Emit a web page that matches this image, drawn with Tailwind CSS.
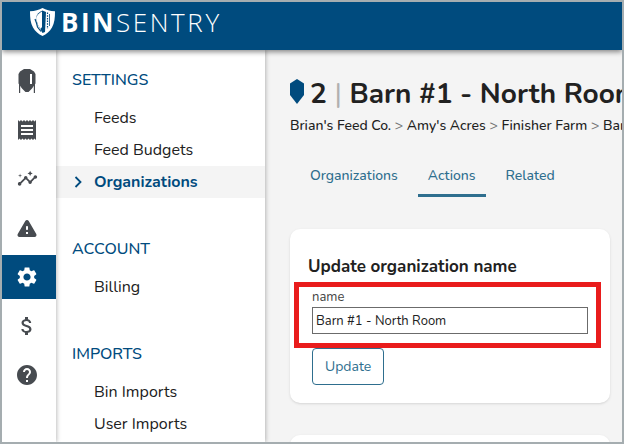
<!DOCTYPE html>
<html lang="en">
<head>
    <meta charset="UTF-8">
    <meta name="viewport" content="width=device-width, initial-scale=1.0">
    <title>BinSentry - Organizations</title>
    <script src="https://cdn.jsdelivr.net/npm/@tailwindcss/browser@4"></script>
</head>
<body class="flex h-screen flex-col overflow-hidden border-2 border-[#a5adb0] bg-[#f4f4f4] font-['Nunito','Noto_Sans',sans-serif] text-[#212121]">

    <!-- Top bar -->
    <header class="relative z-20 flex h-12 shrink-0 items-center bg-[#004b7e] pb-2 pl-7 text-white shadow-[0_2px_5px_rgba(0,0,0,0.45)]">
        <a href="#" class="flex items-center gap-1.5" aria-label="BinSentry">
            <svg class="h-7 w-[25px]" viewBox="0 0 25 28">
                <path fill="#fff" d="M12.5 0C9 2 5 3 0 3.200C0 10 .5 15 3 19.500C5.200 23.500 8.500 26 12.500 28C16.500 26 19.800 23.500 22 19.500C24.500 15 25 10 25 3.200C20 3 16 2 12.500 0z"/>
                <path fill="#004b7e" d="M12.500 2.500L16 4L15 24L12.500 25L8 17L6 10C7 6 9 4 12.500 2.500z"/>
                <path fill="#fff" d="M12 3.500C9 5 7 7 6 10L8 17L10.500 21L12 19z"/>
                <path fill="none" stroke="#004b7e" stroke-width="1.200" d="M5 11L6.500 15L7.500 19L11 23.500"/>
                <path fill="none" stroke="#004b7e" stroke-width="1.200" stroke-dasharray="1.500 1.200" d="M17.500 4.500V21"/>
                <path fill="none" stroke="#004b7e" stroke-width=".8" d="M19.500 6V18"/>
            </svg>
            <span class="font-['Open_Sans',sans-serif] text-[26px] leading-8 font-light tracking-widest"><b class="font-bold">BIN</b>SENTRY</span>
        </a>
    </header>

    <div class="flex min-h-0 flex-1">
        <!-- Icon rail -->
        <nav class="relative z-10 flex w-[54px] shrink-0 flex-col gap-[5px] bg-white pt-[9px] text-[#474b50] shadow-[1px_0_4px_rgba(0,0,0,0.25)]" aria-label="Main">
            <a href="#" class="grid h-11 shrink-0 place-items-center pr-1" aria-label="Bins">
                <svg class="h-6 w-[18px]" viewBox="0 0 18 24" fill="currentColor">
                    <path fill-rule="evenodd" d="M6 0h6l4 2.500l1.500 2.500v9.500L14 19.500L10.500 23h-3L4 19.500L.5 14.500V5L2 2.500zM12 5v10h2V5z"/>
                    <path d="M1 14h1.200v10H1zM15.800 14H17v10h-1.200z"/>
                </svg>
            </a>
            <a href="#" class="grid h-11 shrink-0 place-items-center pr-1" aria-label="Orders">
                <svg class="size-6" viewBox="0 0 24 24" fill="currentColor"><path d="M18 17H6v-2h12v2zm0-4H6v-2h12v2zm0-4H6V7h12v2zM3 22l1.500-1.500L6 22l1.500-1.500L9 22l1.500-1.500L12 22l1.500-1.500L15 22l1.500-1.500L18 22l1.500-1.500L21 22V2l-1.500 1.500L18 2l-1.500 1.500L15 2l-1.500 1.500L12 2l-1.500 1.500L9 2 7.500 3.500 6 2 4.500 3.500 3 2v20z"/></svg>
            </a>
            <a href="#" class="grid h-11 shrink-0 place-items-center pr-1" aria-label="Insights">
                <svg class="size-[21px]" viewBox="0 1 24 24" fill="currentColor"><path d="M21 8c-1.450 0-2.260 1.440-1.930 2.510l-3.550 3.560c-.3-.09-.74-.09-1.040 0l-2.550-2.550C12.270 10.450 11.460 9 10 9c-1.450 0-2.270 1.440-1.930 2.520l-4.560 4.550C2.440 15.740 1 16.550 1 18c0 1.100.9 2 2 2 1.450 0 2.260-1.440 1.930-2.510l4.550-4.560c.3.09.74.09 1.040 0l2.550 2.550C12.730 16.550 13.540 18 15 18c1.450 0 2.270-1.440 1.930-2.520l3.560-3.550C21.560 12.260 23 11.450 23 10c0-1.100-.9-2-2-2z"/><path d="M15 9l.94-2.070L18 6l-2.060-.93L15 3l-.92 2.070L12 6l2.080.93zM3.500 11L4 9l2-.5L4 8l-.5-2L3 8l-2 .5L3 9z"/><path fill="none" stroke="currentColor" stroke-width=".8" d="M4.900 16.800L9.500 12M10.900 12L14.300 15.200M15.800 15.300L20.400 10.700"/></svg>
            </a>
            <a href="#" class="grid h-11 shrink-0 place-items-center pr-1" aria-label="Alerts">
                <svg class="size-6" viewBox="0 0 24 24" fill="currentColor"><path d="M4.470 21h15.060c1.540 0 2.500-1.670 1.730-3L13.730 4.990c-.77-1.330-2.690-1.330-3.460 0L2.740 18c-.77 1.330.19 3 1.730 3zM12 14c-.55 0-1-.45-1-1v-2c0-.55.45-1 1-1s1 .45 1 1v2c0 .55-.45 1-1 1zm1 4h-2v-2h2v2z"/></svg>
            </a>
            <a href="#" class="grid h-11 shrink-0 place-items-center bg-[#004b7e] pr-1 text-white" aria-label="Settings" aria-current="page">
                <svg class="size-6" viewBox="0 0 24 24" fill="currentColor"><path d="M19.140 12.940c.04-.3.06-.61.06-.94 0-.32-.02-.64-.07-.94l2.030-1.580c.18-.14.23-.41.12-.61l-1.920-3.320c-.12-.22-.37-.29-.59-.22l-2.390.96c-.5-.38-1.030-.7-1.620-.94l-.36-2.540c-.04-.24-.24-.41-.48-.41h-3.840c-.24 0-.43.17-.47.41l-.36 2.540c-.59.24-1.130.57-1.620.94l-2.390-.96c-.22-.08-.47 0-.59.22L2.740 8.870c-.12.21-.08.47.12.61l2.030 1.580c-.05.3-.09.63-.09.94s.02.64.07.94l-2.030 1.580c-.18.14-.23.41-.12.61l1.920 3.320c.12.22.37.29.59.22l2.390-.96c.5.38 1.030.7 1.620.94l.36 2.540c.05.24.24.41.48.41h3.840c.24 0 .44-.17.47-.41l.36-2.540c.59-.24 1.130-.56 1.620-.94l2.390.96c.22.08.47 0 .59-.22l1.920-3.320c.12-.22.07-.47-.12-.61l-2.010-1.580zM12 15.600c-1.980 0-3.600-1.620-3.600-3.600s1.620-3.600 3.600-3.600 3.600 1.620 3.600 3.600-1.620 3.600-3.600 3.600z"/></svg>
            </a>
            <a href="#" class="grid h-11 shrink-0 place-items-center pr-1" aria-label="Billing">
                <svg class="size-6" viewBox="0 0 24 24" fill="currentColor"><path d="M11.800 10.900c-2.270-.59-3-1.200-3-2.150 0-1.090 1.010-1.850 2.700-1.850 1.780 0 2.440.85 2.500 2.100h2.210c-.07-1.720-1.120-3.300-3.210-3.810V3h-3v2.160c-1.940.42-3.500 1.680-3.500 3.610 0 2.310 1.910 3.460 4.700 4.130 2.500.6 3 1.480 3 2.410 0 .69-.49 1.790-2.700 1.790-2.060 0-2.870-.92-2.980-2.100h-2.200c.12 2.190 1.760 3.420 3.680 3.830V21h3v-2.150c1.950-.37 3.500-1.500 3.500-3.550 0-2.840-2.430-3.810-4.700-4.400z"/></svg>
            </a>
            <a href="#" class="grid h-11 shrink-0 place-items-center pr-1" aria-label="Help">
                <svg class="size-6" viewBox="0 0 24 24" fill="currentColor"><path d="M12 2C6.480 2 2 6.480 2 12s4.480 10 10 10 10-4.480 10-10S17.520 2 12 2zm1 17h-2v-2h2v2zm2.070-7.750l-.9.920C13.450 12.900 13 13.500 13 15h-2v-.5c0-1.100.45-2.100 1.170-2.830l1.240-1.260c.37-.36.59-.86.59-1.410 0-1.100-.9-2-2-2s-2 .9-2 2H8c0-2.210 1.790-4 4-4s4 1.790 4 4c0 .88-.36 1.680-.93 2.250z"/></svg>
            </a>
        </nav>

        <!-- Settings menu -->
        <aside class="flex w-[209px] shrink-0 flex-col gap-[39px] bg-white pt-[18px] shadow-[1px_0_4px_rgba(0,0,0,0.25)]">
            <section>
                <h2 class="mb-2.5 pl-4 text-base font-medium text-[#004b7e]">SETTINGS</h2>
                <a href="#" class="flex h-8 items-center pl-[38px]">Feeds</a>
                <a href="#" class="flex h-8 items-center pl-[38px]">Feed Budgets</a>
                <a href="#" class="flex h-8 items-center gap-3 bg-[#f4f4f4] pl-[18px] font-bold text-[#004b7e]" aria-current="page">
                    <svg class="h-3 w-2" viewBox="0 0 8 12" fill="none" stroke="currentColor" stroke-width="1.800"><path d="M1.500 1L6.500 6L1.500 11"/></svg>
                    Organizations
                </a>
            </section>
            <section>
                <h2 class="mb-2.5 pl-4 text-base font-medium text-[#004b7e]">ACCOUNT</h2>
                <a href="#" class="flex h-8 items-center pl-[38px]">Billing</a>
            </section>
            <section>
                <h2 class="mb-2.5 pl-4 text-base font-medium text-[#004b7e]">IMPORTS</h2>
                <a href="#" class="flex h-8 items-center pl-[38px]">Bin Imports</a>
                <a href="#" class="flex h-8 items-center pl-[38px]">User Imports</a>
            </section>
        </aside>

        <!-- Content -->
        <main class="min-w-0 flex-1 overflow-hidden pt-6 pl-[25px]">
            <h1 class="flex items-center gap-1.5 text-[28px] leading-10 font-bold whitespace-nowrap">
                <svg class="mb-1.5 h-[25px] w-3.5 shrink-0" viewBox="0 0 14 25" fill="#004b7e"><path d="M7 0L14 4.500V16L7 25L0 16V4.500z"/></svg>
                <span>2 <span class="font-normal text-[#b0b0b0]">|</span> Barn #1 - North Room</span>
            </h1>
            <nav class="text-sm leading-6 font-medium whitespace-nowrap" aria-label="Breadcrumb">
                <a href="#">Brian's Feed Co.</a> <span class="text-[#757575]">&gt;</span>
                <a href="#">Amy's Acres</a> <span class="text-[#757575]">&gt;</span>
                <a href="#">Finisher Farm</a> <span class="text-[#757575]">&gt;</span>
                <a href="#">Barn #1 - North Room</a>
            </nav>

            <nav class="mt-5 flex gap-2.5 pl-2.5 text-sm font-medium text-[#2e6e8e]" aria-label="Tabs">
                <a href="#" class="border-b-3 border-transparent px-2.5 py-2">Organizations</a>
                <a href="#" class="border-b-3 border-[#2e6e8e] px-2.5 py-2" aria-current="page">Actions</a>
                <a href="#" class="border-b-3 border-transparent px-2.5 py-2">Related</a>
            </nav>

            <div class="mt-8 mr-3 flex flex-col gap-8">
                <form class="rounded-[10px] bg-white px-[18px] pt-[26px] pb-[18px] shadow-sm">
                    <h2 class="text-[17px] leading-6 font-bold">Update organization name</h2>
                    <div class="mr-1 ml-1">
                        <!-- Highlighted field -->
                        <div class="relative pt-2 pb-3.5">
                            <label for="name" class="block text-[13px] leading-5 text-[#424242]">name</label>
                            <input id="name" type="text" value="Barn #1 - North Room" class="block h-[27px] w-full border border-[#6b6b6b] bg-white px-[3px] text-[13px]">
                            <div class="pointer-events-none absolute top-[3px] -right-[13px] bottom-0 -left-[18px] border-[5px] border-[#e91c1c]"></div>
                        </div>
                        <button type="button" class="h-[37px] rounded border border-[#2e6e8e] px-3 text-sm text-[#2e6e8e]">Update</button>
                    </div>
                </form>
                <section class="h-40 rounded-[10px] bg-white shadow-sm"></section>
            </div>
        </main>
    </div>

</body>
</html>
